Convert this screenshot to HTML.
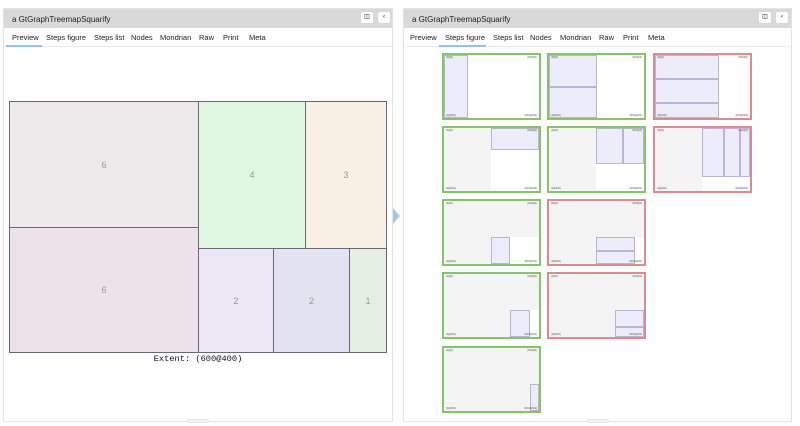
<!DOCTYPE html>
<html><head><meta charset="utf-8">
<style>
*{box-sizing:border-box;margin:0;padding:0}
body{width:800px;height:426px;background:#fff;position:relative;overflow:hidden;font-family:"Liberation Sans",sans-serif}
.panel{position:absolute;top:8px;height:414px;border:1px solid #e4e4e4;background:#fff}
.hdr{position:absolute;left:0;right:0;top:0;height:19px;background:#d9d9d9;font-size:8px;color:#222;padding:6px 0 0 8px}
.btn{position:absolute;top:3px;width:12px;height:11px;background:#fff;border-radius:2px;font-size:6px;text-align:center;line-height:11px}
.tabs{position:absolute;top:19px;left:0;right:0;height:19px;border-bottom:1px solid #ececec;font-size:7.5px;color:#222}
.tabs span{position:absolute;top:5px}
.ul{position:absolute;top:17px;height:2px;background:#8ec4ee}
.c{position:absolute;border:1px solid #6e6678;color:#999;font-size:9px;display:flex;align-items:center;justify-content:center}
.t{position:absolute;width:99px;height:67px;background:#fff;overflow:hidden}
.f{position:absolute;left:0;top:0;width:99px;height:67px;border:2px solid #86c46a}
.f.r{border-color:#e08a90}
.g{position:absolute;background:#f4f4f4}
.l{position:absolute;background:#ececfb;border:1px solid #b8b6d6}
.lb{position:absolute;font-size:2.5px;color:#555}
.grip{position:absolute;bottom:-2px;width:22px;height:4px;background:#f4f4f4;border:1px solid #e4e4e4;border-radius:2px}
</style></head><body>

<div class="panel" style="left:3px;width:390px">
  <div class="hdr">a GtGraphTreemapSquarify</div>
  <div class="btn" style="left:357px">&#9707;</div><div class="btn" style="left:374px">&#8249;</div>
  <div class="tabs">
    <span style="left:8px">Preview</span><span style="left:42px">Steps figure</span><span style="left:90px">Steps list</span><span style="left:127px">Nodes</span><span style="left:156px">Mondrian</span><span style="left:195px">Raw</span><span style="left:219px">Print</span><span style="left:245px">Meta</span>
    <div class="ul" style="left:2px;width:36px"></div>
  </div>
  <div class="grip" style="left:183px"></div>
</div>

<div class="c" style="left:9px;top:101px;width:190px;height:127px;background:#ede9ea">6</div>
<div class="c" style="left:9px;top:227px;width:190px;height:126px;background:#eee2ea">6</div>
<div class="c" style="left:198px;top:101px;width:108px;height:148px;background:#e0f8e1">4</div>
<div class="c" style="left:305px;top:101px;width:82px;height:148px;background:#f8efe5">3</div>
<div class="c" style="left:198px;top:248px;width:76px;height:105px;background:#ece7f4">2</div>
<div class="c" style="left:273px;top:248px;width:77px;height:105px;background:#e2e2f1">2</div>
<div class="c" style="left:349px;top:248px;width:38px;height:105px;background:#e6efe4">1</div>
<div style="position:absolute;left:9px;width:378px;top:354px;text-align:center;font-family:'Liberation Mono',monospace;font-size:8.7px;color:#111">Extent: (600@400)</div>

<div style="position:absolute;left:393px;top:208px;width:0;height:0;border-top:8px solid transparent;border-bottom:8px solid transparent;border-left:7px solid #a9c9ec"></div>

<div class="panel" style="left:403px;width:389px">
  <div class="hdr">a GtGraphTreemapSquarify</div>
  <div class="btn" style="left:355px">&#9707;</div><div class="btn" style="left:372px">&#8249;</div>
  <div class="tabs">
    <span style="left:6px">Preview</span><span style="left:41px">Steps figure</span><span style="left:89px">Steps list</span><span style="left:126px">Nodes</span><span style="left:156px">Mondrian</span><span style="left:195px">Raw</span><span style="left:219px">Print</span><span style="left:244px">Meta</span>
    <div class="ul" style="left:35px;width:47px"></div>
  </div>
  <div class="grip" style="left:183px"></div>
</div>

<script>
var cols=[442,547,653], rows=[53,126,199,272,346];
var T=[
 [0,0,0,[["l",2,2,24,63]]],
 [0,1,0,[["l",2,2,48,32],["l",2,34,48,31]]],
 [0,2,1,[["l",2,2,64,24],["l",2,26,64,24],["l",2,50,64,15]]],
 [1,0,0,[["g",0,0,49,67],["l",49,2,48,22]]],
 [1,1,0,[["g",0,0,49,67],["l",49,2,27,36],["l",76,2,21,36]]],
 [1,2,1,[["g",0,0,49,67],["l",49,2,22,49],["l",71,2,16,49],["l",87,2,10,49]]],
 [2,0,0,[["g",0,0,99,38],["g",0,0,49,67],["l",49,38,19,27]]],
 [2,1,1,[["g",0,0,99,38],["g",0,0,49,67],["l",49,38,39,14],["l",49,52,39,13]]],
 [3,0,0,[["g",0,0,99,38],["g",0,0,68,67],["l",68,38,20,27]]],
 [3,1,1,[["g",0,0,99,38],["g",0,0,68,67],["l",68,38,29,17],["l",68,55,29,10]]],
 [4,0,0,[["g",0,0,99,67],["l",88,38,9,27]]]
];
var h='';
T.forEach(function(t){
 h+='<div class="t" style="left:'+cols[t[1]]+'px;top:'+rows[t[0]]+'px">';
 t[3].forEach(function(b){h+='<div class="'+b[0]+'" style="left:'+b[1]+'px;top:'+b[2]+'px;width:'+b[3]+'px;height:'+b[4]+'px"></div>';});
 h+='<div class="lb" style="left:4px;top:3px">(0@0)</div><div class="lb" style="right:4px;top:3px">(600@0)</div><div class="lb" style="left:4px;bottom:3px">(0@400)</div><div class="lb" style="right:4px;bottom:3px">(600@400)</div><div class="f'+(t[2]?' r':'')+'"></div></div>';
});
document.write(h);
</script>
</body></html>
